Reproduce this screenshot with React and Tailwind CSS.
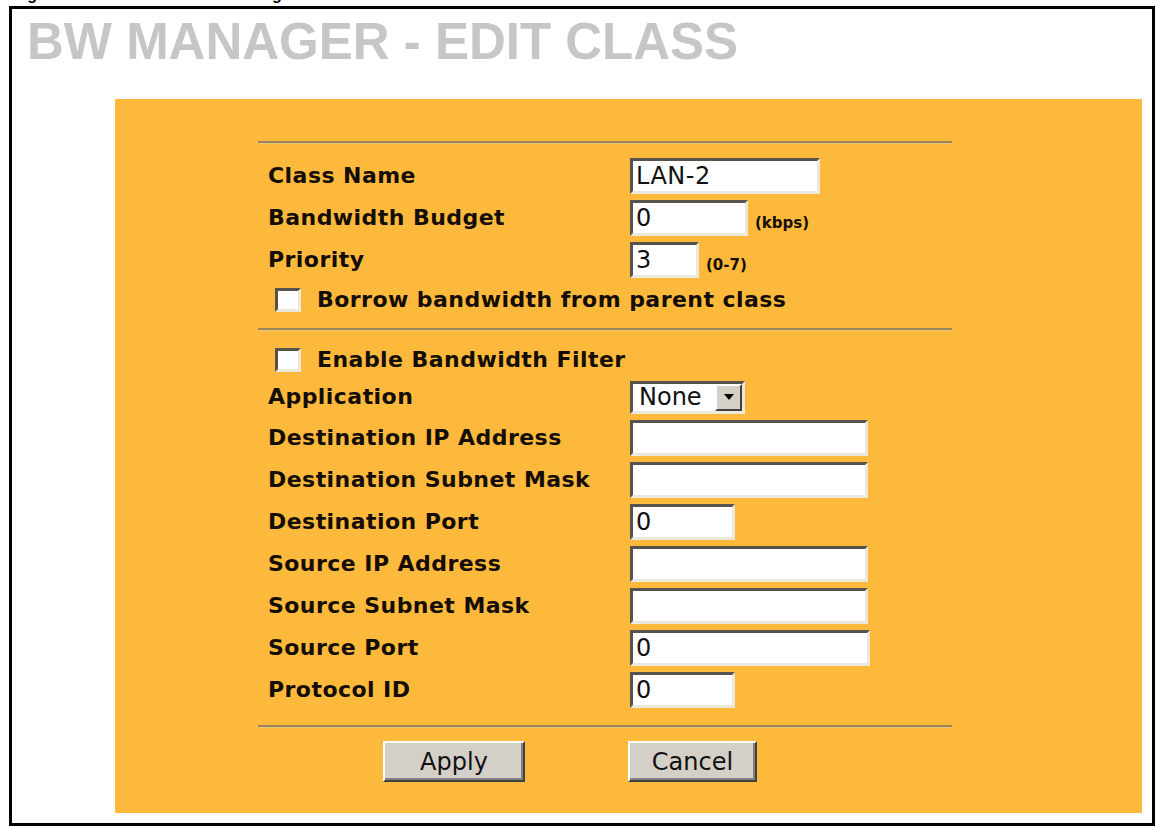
import React from "react";

const sunken =
  "bg-white border-[3px] border-t-[#57524b] border-l-[#57524b] border-b-[#ece8dc] border-r-[#ece8dc]";

const Row = ({ label, h = "h-[42px]", children }) => {
  return (
    <div className={`flex items-center ${h}`}>
      <div className="w-[372px] shrink-0 pl-[10px] text-[22px] font-bold leading-none tracking-[0.45px] text-[#140d05]">
        {label}
      </div>
      {children}
    </div>
  );
};

const TextBox = ({ width, value }) => {
  return (
    <div
      className={`${width} h-[36px] ${sunken} flex items-center pl-[3px] text-[24px] leading-none tracking-[0.5px] text-[#111]`}
    >
      {value}
    </div>
  );
};

const CheckRow = ({ label, h }) => {
  return (
    <div className={`flex items-center pl-[17px] ${h}`}>
      <div className={`w-[26px] h-[24px] ${sunken}`}></div>
      <span className="ml-[16px] text-[22px] font-bold leading-none tracking-[0.45px] text-[#140d05]">
        {label}
      </span>
    </div>
  );
};

const Hint = ({ text }) => (
  <span className="self-end mb-[5px] ml-[7px] text-[15px] font-bold leading-none text-[#140d05]">
    {text}
  </span>
);

const WinButton = ({ title, width }) => (
  <div
    className={`${width} h-[41px] bg-[#d4d0c8] border-2 border-t-white border-l-white border-b-[#404040] border-r-[#404040] shadow-[inset_-2px_-2px_0_#808080] flex items-center justify-center text-[24px] leading-none text-[#111]`}
  >
    {title}
  </div>
);

const Divider = () => (
  <div className="w-[694px] h-[3px] border-t-2 border-[#9c8657] border-b border-b-[#e9c57c]"></div>
);

const App = () => {
  const filterRows = [
    { label: "Destination IP Address", width: "w-[238px]", value: "" },
    { label: "Destination Subnet Mask", width: "w-[238px]", value: "" },
    { label: "Destination Port", width: "w-[105px]", value: "0" },
    { label: "Source IP Address", width: "w-[238px]", value: "" },
    { label: "Source Subnet Mask", width: "w-[238px]", value: "" },
    { label: "Source Port", width: "w-[240px]", value: "0" },
    { label: "Protocol ID", width: "w-[105px]", value: "0" },
  ];

  return (
    <div className="w-[1157px] h-[826px] bg-white overflow-hidden font-['DejaVu_Sans',sans-serif]">
      {/* caption above the frame, only its descenders show */}
      <div className="h-[6px] overflow-hidden font-['Liberation_Sans',Arial,sans-serif] font-bold text-[16px] leading-[16px] text-black">
        <div className="flex mt-[-13px] pl-[13px]">
          <span>Figure 150</span>
          <span className="ml-[107px]">BW Manager: Edit Class</span>
        </div>
      </div>

      <div className="ml-[9px] w-[1146px] h-[820px] border-[3px] border-black bg-white">
        <div className="pt-[7px] pl-[15px] h-[59px] font-['Liberation_Sans',Arial,sans-serif] font-bold text-[51px] leading-[52px] text-[#c6c6c6] whitespace-nowrap">
          BW MANAGER - EDIT CLASS
        </div>

        <div className="mt-[31px] ml-[103px] w-[1027px] h-[714px] bg-[#fdb93b] pt-[42px] pl-[143px]">
          <Divider />

          <div className="mt-[11px]">
            <Row label="Class Name">
              <TextBox width="w-[190px]" value="LAN-2" />
            </Row>
            <Row label="Bandwidth Budget">
              <div className="flex h-[36px]">
                <TextBox width="w-[118px]" value="0" />
                <Hint text="(kbps)" />
              </div>
            </Row>
            <Row label="Priority">
              <div className="flex h-[36px]">
                <TextBox width="w-[69px]" value="3" />
                <Hint text="(0-7)" />
              </div>
            </Row>
            <CheckRow label="Borrow bandwidth from parent class" h="h-[38px]" />
          </div>

          <div className="mt-[9px]">
            <Divider />
          </div>

          <div className="mt-[12px]">
            <CheckRow label="Enable Bandwidth Filter" h="h-[34px]" />
            <Row label="Application" h="h-[40px]">
              <div className={`w-[115px] h-[33px] ${sunken} flex items-center justify-between`}>
                <span className="pl-[6px] text-[24px] leading-none text-[#111]">None</span>
                <div className="w-[27px] h-[27px] bg-[#d4d0c8] border-2 border-t-white border-l-white border-b-[#404040] border-r-[#404040] flex items-center justify-center">
                  <svg width="10" height="6" viewBox="0 0 10 6">
                    <polygon points="0,0 10,0 5,6" fill="#000" />
                  </svg>
                </div>
              </div>
            </Row>
            {filterRows.map((row, index) => (
              <Row key={index} label={row.label}>
                <TextBox width={row.width} value={row.value} />
              </Row>
            ))}
          </div>

          <div className="mt-[14px]">
            <Divider />
          </div>

          <div className="flex mt-[13px] pl-[125px] gap-[103px]">
            <WinButton title="Apply" width="w-[142px]" />
            <WinButton title="Cancel" width="w-[129px]" />
          </div>
        </div>
      </div>
    </div>
  );
};

export default App;
